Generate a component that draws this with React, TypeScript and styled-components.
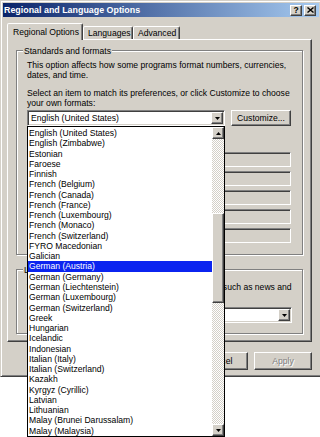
import React from "react";
import styled, { createGlobalStyle } from "styled-components";

const face = "#d4d0c8";
const shadow = "#808080";
const dark = "#404040";

const GlobalStyle = createGlobalStyle`
  html {
    overflow: hidden;
  }
  html, body {
    margin: 0;
    padding: 0;
    background: #fff;
  }
  body {
    min-height: 437px;
    font-family: "Liberation Sans", Arial, sans-serif;
    font-size: 8.6px;
    color: #000;
  }
`;

const Window = styled.div`
  width: 322px;
  height: 377px;
  box-sizing: border-box;
  background: ${face};
  border: 1px solid;
  border-color: ${face} ${dark} ${dark} ${face};
  box-shadow: inset 1px 1px #fff, inset -1px -1px ${shadow};
  padding: 2px;
  display: flex;
  flex-direction: column;
`;

const TitleBar = styled.div`
  height: 14px;
  display: flex;
  align-items: center;
  padding: 0 3px 0 1px;
  background: linear-gradient(90deg, #0a246a 0%, #a6caf0 100%);
`;

const TitleText = styled.div`
  flex: 1;
  color: #fff;
  font-weight: bold;
  font-size: 8.9px;
  white-space: nowrap;
`;

const raised = `
  border: 1px solid;
  border-color: #fff ${dark} ${dark} #fff;
  box-shadow: inset -1px -1px ${shadow};
  background: ${face};
  box-sizing: border-box;
`;

const CaptionButton = styled.div`
  ${raised}
  width: 12px;
  height: 11px;
  margin-left: 2px;
  display: flex;
  align-items: center;
  justify-content: center;
  font-weight: bold;
  font-size: 8.5px;
  line-height: 9px;
`;

const Body = styled.div`
  flex: 1;
  display: flex;
  flex-direction: column;
  padding: 6px 7px 0 4px;
`;

const TabRow = styled.div`
  height: 16px;
  display: flex;
  align-items: flex-end;
`;

const Tab = styled.div<{ $active?: boolean; $w: number }>`
  box-sizing: border-box;
  width: ${(p) => p.$w}px;
  height: ${(p) => (p.$active ? 17 : 13)}px;
  margin-bottom: ${(p) => (p.$active ? "-1px" : "0")};
  padding: ${(p) => (p.$active ? "3px 0 0 5px" : "1px 0 0 4px")};
  line-height: 10px;
  white-space: nowrap;
  border: 1px solid;
  border-bottom: none;
  border-color: #fff ${dark} transparent #fff;
  border-radius: 2px 2px 0 0;
  box-shadow: inset -1px 0 ${shadow};
  background: ${face};
  position: relative;
  z-index: ${(p) => (p.$active ? 2 : 1)};
`;

const Panel = styled.div`
  height: 303px;
  box-sizing: border-box;
  border: 1px solid;
  border-color: #fff ${dark} ${dark} #fff;
  box-shadow: inset -1px -1px ${shadow};
  padding: 10px 8px 0 8px;
  display: flex;
  flex-direction: column;
`;

const Group = styled.div<{ $gap?: number; $pb: number }>`
  margin-top: ${(p) => p.$gap ?? 0}px;
  border: 1px solid ${shadow};
  box-shadow: inset 1px 1px #fff, 1px 1px #fff;
  padding: 0 10px ${(p) => p.$pb}px 10px;
  display: flex;
  flex-direction: column;
`;

const Legend = styled.div`
  align-self: flex-start;
  margin: -5px 0 0 -4px;
  padding: 0 1px;
  line-height: 10px;
  background: ${face};
`;

const Para = styled.div<{ $mt: number }>`
  margin-top: ${(p) => p.$mt}px;
  line-height: 10px;
  white-space: nowrap;
`;

const ComboRow = styled.div`
  margin-top: 2px;
  display: flex;
  gap: 6px;
`;

const ComboWrap = styled.div<{ $w: number }>`
  position: relative;
  width: ${(p) => p.$w}px;
`;

const Combo = styled.div<{ $mt?: number }>`
  margin-top: ${(p) => p.$mt ?? 0}px;
  height: 16px;
  box-sizing: border-box;
  border: 1px solid;
  border-color: ${shadow} #fff #fff ${shadow};
  box-shadow: inset 1px 1px ${dark}, inset -1px -1px ${face};
  background: #fff;
  display: flex;
  align-items: center;
  padding: 1px 1px 1px 2px;
`;

const ComboText = styled.div`
  flex: 1;
  padding-left: 1px;
  white-space: nowrap;
  overflow: hidden;
`;

const ArrowButton = styled.div<{ $h?: number }>`
  ${raised}
  width: 12px;
  height: ${(p) => p.$h ?? 12}px;
  flex: none;
  display: flex;
  align-items: center;
  justify-content: center;
`;

const PushButton = styled.div<{ $w: number; $h: number; $disabled?: boolean }>`
  ${raised}
  width: ${(p) => p.$w}px;
  height: ${(p) => p.$h}px;
  display: flex;
  align-items: center;
  justify-content: center;
  white-space: nowrap;
  color: ${(p) => (p.$disabled ? shadow : "#000")};
  text-shadow: ${(p) => (p.$disabled ? "1px 1px #fff" : "none")};
`;

const SampleList = styled.div`
  margin: 26px 0 0 73px;
  display: flex;
  flex-direction: column;
  gap: 4px;
`;

const SampleBox = styled.div`
  height: 15px;
  box-sizing: border-box;
  border: 1px solid;
  border-color: ${shadow} #fff #fff ${shadow};
  box-shadow: inset 1px 1px ${dark};
  margin-right: 1px;
`;

const ButtonRow = styled.div`
  margin-top: 10px;
  display: flex;
  justify-content: flex-end;
  gap: 6px;
`;

const DropList = styled.div`
  position: absolute;
  top: 16px;
  left: 0;
  width: 198px;
  height: 311px;
  box-sizing: border-box;
  border: 1px solid #000;
  background: #fff;
  display: flex;
  z-index: 10;
`;

const Items = styled.div`
  flex: 1;
  padding-top: 1px;
  overflow: hidden;
`;

const Item = styled.div<{ $selected?: boolean }>`
  height: 10.27px;
  line-height: 10.27px;
  padding-left: 1px;
  white-space: nowrap;
  background: ${(p) => (p.$selected ? "#0b24f0" : "transparent")};
  color: ${(p) => (p.$selected ? "#fff" : "#000")};
`;

const ScrollBar = styled.div`
  width: 12px;
  display: flex;
  flex-direction: column;
`;

const Track = styled.div`
  flex: 1;
  background: repeating-conic-gradient(${face} 0 25%, #fff 0 50%) 0 0 / 2px 2px;
`;

const Thumb = styled.div`
  ${raised}
  margin-top: 74px;
  height: 90px;
`;

const DownArrow = () => (
  <svg width="5" height="3" viewBox="0 0 5 3">
    <path d="M0 0h5L2.5 3z" fill="#000" />
  </svg>
);

const UpArrow = () => (
  <svg width="5" height="3" viewBox="0 0 5 3">
    <path d="M0 3h5L2.5 0z" fill="#000" />
  </svg>
);

const locales = [
  "English (United States)",
  "English (Zimbabwe)",
  "Estonian",
  "Faroese",
  "Finnish",
  "French (Belgium)",
  "French (Canada)",
  "French (France)",
  "French (Luxembourg)",
  "French (Monaco)",
  "French (Switzerland)",
  "FYRO Macedonian",
  "Galician",
  "German (Austria)",
  "German (Germany)",
  "German (Liechtenstein)",
  "German (Luxembourg)",
  "German (Switzerland)",
  "Greek",
  "Hungarian",
  "Icelandic",
  "Indonesian",
  "Italian (Italy)",
  "Italian (Switzerland)",
  "Kazakh",
  "Kyrgyz (Cyrillic)",
  "Latvian",
  "Lithuanian",
  "Malay (Brunei Darussalam)",
  "Malay (Malaysia)",
];

export default function App() {
  return (
    <>
      <GlobalStyle />
      <Window>
        <TitleBar>
          <TitleText>Regional and Language Options</TitleText>
          <CaptionButton>?</CaptionButton>
          <CaptionButton>
            <svg width="7" height="6" viewBox="0 0 7 6">
              <path d="M0.5 0.5L6.5 5.5M6.5 0.5L0.5 5.5" stroke="#000" strokeWidth="1.4" />
            </svg>
          </CaptionButton>
        </TitleBar>
        <Body>
          <TabRow>
            <Tab $active $w={76}>Regional Options</Tab>
            <Tab $w={50}>Languages</Tab>
            <Tab $w={47}>Advanced</Tab>
          </TabRow>
          <Panel>
            <Group $pb={11}>
              <Legend>Standards and formats</Legend>
              <Para $mt={4}>
                This option affects how some programs format numbers, currencies,
                <br />
                dates, and time.
              </Para>
              <Para $mt={8}>
                Select an item to match its preferences, or click Customize to choose
                <br />
                your own formats:
              </Para>
              <ComboRow>
                <ComboWrap $w={198}>
                  <Combo>
                    <ComboText>English (United States)</ComboText>
                    <ArrowButton>
                      <DownArrow />
                    </ArrowButton>
                  </Combo>
                  <DropList>
                    <Items>
                      {locales.map((l) => (
                        <Item key={l} $selected={l === "German (Austria)"}>
                          {l}
                        </Item>
                      ))}
                    </Items>
                    <ScrollBar>
                      <ArrowButton>
                        <UpArrow />
                      </ArrowButton>
                      <Track>
                        <Thumb />
                      </Track>
                      <ArrowButton>
                        <DownArrow />
                      </ArrowButton>
                    </ScrollBar>
                  </DropList>
                </ComboWrap>
                <PushButton $w={60} $h={16}>Customize...</PushButton>
              </ComboRow>
              <SampleList>
                <SampleBox />
                <SampleBox />
                <SampleBox />
                <SampleBox />
                <SampleBox />
              </SampleList>
            </Group>
            <Group $gap={14} $pb={10}>
              <Legend>Location</Legend>
              <Para $mt={7}>
                To help services provide you with local information, such as news and
              </Para>
              <Combo $mt={15}>
                <ComboText />
                <ArrowButton>
                  <DownArrow />
                </ArrowButton>
              </Combo>
            </Group>
          </Panel>
          <ButtonRow>
            <PushButton $w={58} $h={18}>OK</PushButton>
            <PushButton $w={58} $h={18}>Cancel</PushButton>
            <PushButton $w={58} $h={18} $disabled>Apply</PushButton>
          </ButtonRow>
        </Body>
      </Window>
    </>
  );
}
